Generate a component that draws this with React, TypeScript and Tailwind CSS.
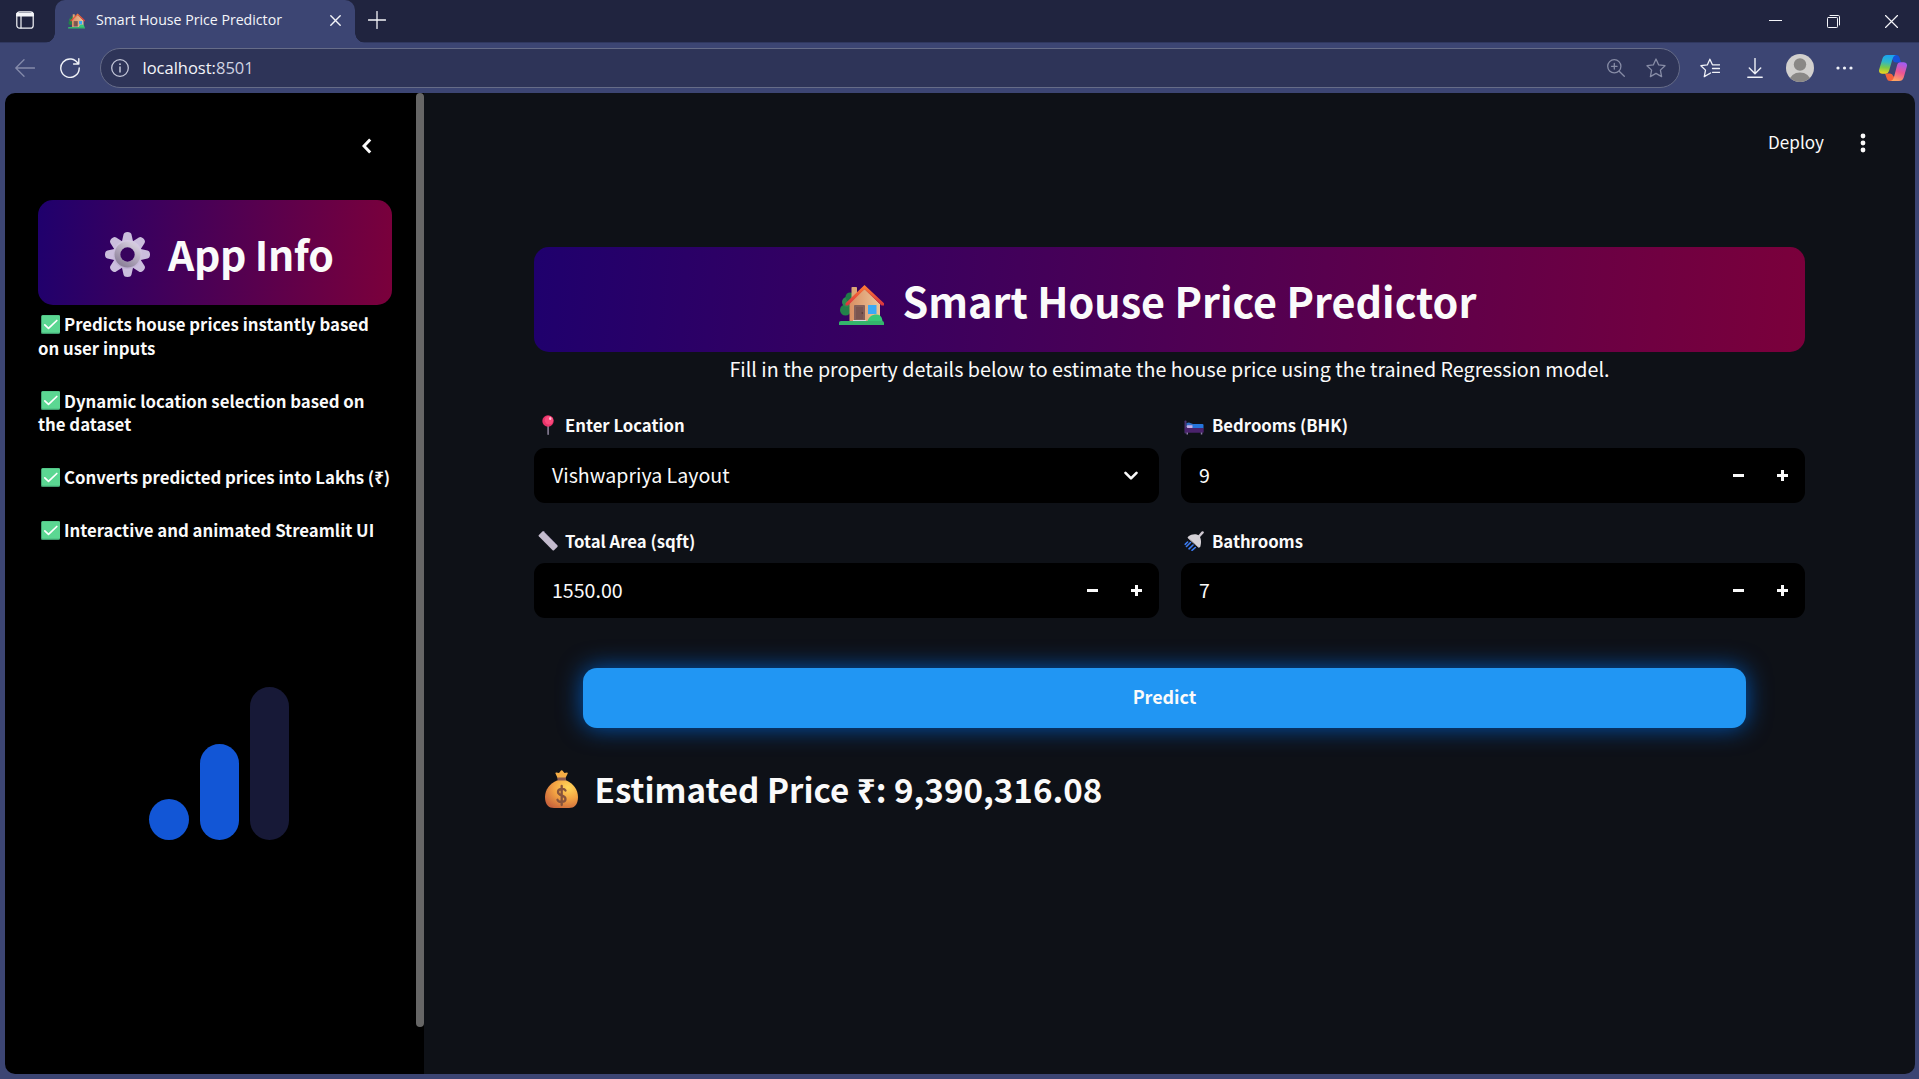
import type { ReactNode } from 'react';

function HouseIcon({ className }: { className: string }) {
  return (
    <svg viewBox="0 0 45 40" className={className}>
      <defs>
        <linearGradient id="wall" x1="0" x2="1" y1="0" y2="0">
          <stop offset="0" stopColor="#d98f62" />
          <stop offset="1" stopColor="#ecc49a" />
        </linearGradient>
        <linearGradient id="roof" x1="0" x2="0" y1="0" y2="1">
          <stop offset="0" stopColor="#ff7f35" />
          <stop offset="1" stopColor="#d9333f" />
        </linearGradient>
      </defs>
      <circle cx="6.5" cy="25" r="5.5" fill="#22804a" />
      <circle cx="8" cy="17" r="5" fill="#2a8a50" />
      <circle cx="11" cy="12" r="4.5" fill="#1f7a48" />
      <rect x="12.5" y="2" width="5.5" height="13" rx="0.8" fill="#dba676" />
      <path d="M10.5 37V17L25.5 4L41 19V37Z" fill="url(#wall)" />
      <path d="M25.500 0L45 18.300V20.500H42.500L25.500 4.300L9 20.500H6.500V18.300Z" fill="url(#roof)" />
      <rect x="15" y="20" width="11" height="16" rx="0.8" fill="#85605a" />
      <rect x="17" y="22" width="7" height="12" fill="#7a5550" />
      <circle cx="23.3" cy="28" r="0.8" fill="#4b3230" />
      <rect x="14" y="35" width="13" height="2" fill="#d8d4e0" />
      <rect x="29" y="20" width="8.5" height="9" fill="#3ba9f5" />
      <path d="M28 38C29 32 33 29.500 37.500 29.500C41.500 29.500 43.500 33 43.500 37Z" fill="#38c878" />
      <path d="M0 40V37.500Q0 36 2 36H43Q45 36 45 37.500V40Z" fill="#34b56c" />
    </svg>
  );
}

function GearIcon() {
  return (
    <svg viewBox="-22.500 -22.500 45 45" className="mt-[3px] size-[45px]">
      <defs>
        <linearGradient id="gear" gradientUnits="userSpaceOnUse" x1="6" x2="-6" y1="-22" y2="22">
          <stop offset="0" stopColor="#ded3ea" />
          <stop offset="1" stopColor="#b7a8cd" />
        </linearGradient>
        <linearGradient id="ring" x1="0.800" x2="0.200" y1="0" y2="1">
          <stop offset="0" stopColor="#d3cadb" />
          <stop offset="1" stopColor="#8e839b" />
        </linearGradient>
      </defs>
      {[0, 45, 90, 135].map((a) => (
        <path
          key={a}
          transform={`rotate(${a})`}
          d="M-4 -20Q-3.500 -22.500 0 -22.500Q3.500 -22.500 4 -20L6 -11V11L4 20Q3.500 22.500 0 22.500Q-3.500 22.500 -4 20L-6 11V-11Z"
          fill="#cbbedd"
        />
      ))}
      <circle r="14.500" fill="url(#gear)" />
      <circle r="10" fill="none" stroke="url(#ring)" strokeWidth="6" />
      <circle r="7.200" fill="#37035d" />
    </svg>
  );
}

function CheckIcon() {
  return (
    <svg viewBox="0 0 19 19" className="ml-[3px] mr-[4px] inline-block size-[19px] align-[-2.5px]">
      <rect width="19" height="19" rx="1.600" fill="#3f9a6c" />
      <rect x="0.800" y="0.300" width="18.200" height="17.500" rx="1.200" fill="#5bd792" />
      <path d="M3.800 9.800L7.500 13.400L15.800 5.500" fill="none" stroke="#fff" strokeWidth="1.700" strokeLinecap="round" strokeLinejoin="round" />
    </svg>
  );
}

function PinIcon() {
  return (
    <svg viewBox="0 0 20 20" className="size-5">
      <rect x="9.400" y="9" width="1.400" height="11" rx="0.700" fill="#9a8fa8" />
      <circle cx="10" cy="6" r="5.700" fill="#e8336a" />
      <circle cx="11" cy="5.200" r="4.200" fill="#fa4a7c" />
      <ellipse cx="12.200" cy="3.600" rx="1.200" ry="1.500" fill="#ffc0d2" />
    </svg>
  );
}

function RulerIcon() {
  return (
    <svg viewBox="0 0 20 20" className="size-5">
      <path d="M5.500 0.300L19.500 14.500Q20 15.200 19.300 16L16 19.300Q15.300 19.800 14.600 19.200L0.800 5.300Q0.300 4.700 0.900 4L4.400 0.400Q5 -0.100 5.500 0.300Z" fill="#c3bbcd" />
      <path d="M5.500 0.300L19.500 14.500" stroke="#8a7fa5" strokeWidth="0.900" strokeDasharray="1.200 1" />
    </svg>
  );
}

function BedIcon() {
  return (
    <svg viewBox="0 0 20 20" className="-ml-px mr-px size-5">
      <rect x="0.500" y="5.500" width="2" height="13" rx="0.800" fill="#4b3574" />
      <path d="M2.500 8L5 7.500L9 9V12H2.500Z" fill="#2f6fc4" />
      <rect x="2.700" y="10.300" width="6.500" height="2.800" rx="0.800" fill="#c3aee6" />
      <rect x="8.500" y="9" width="11" height="5" rx="1" fill="#2575dc" />
      <rect x="1" y="13" width="18.700" height="4.800" rx="0.800" fill="#4a226c" />
      <rect x="2.500" y="17.500" width="1.500" height="2" fill="#8b7aa8" />
      <rect x="16.800" y="17.500" width="1.500" height="2" fill="#8b7aa8" />
    </svg>
  );
}

function ShowerIcon() {
  return (
    <svg viewBox="0 0 20 20" className="-ml-px mr-px size-5">
      <path d="M14.500 6L18.600 1.400" stroke="#cfc9d2" strokeWidth="2.400" strokeLinecap="round" />
      <path d="M4.300 5.500C7.500 3 12 2.500 14.800 4.500C17.500 7 17.500 12 16.300 15.800Q15.500 17.300 14 15.800L4.200 7.300Q3.300 6.300 4.300 5.500Z" fill="#d3d0d5" />
      <path d="M4 7L14.500 16.300" stroke="#a5a1aa" strokeWidth="1" strokeLinecap="round" />
      <path d="M3.600 11L1.200 13.300M6.500 11.500L2.500 15.500M9 14L5 17.800M11.300 16.500L8 19.300" stroke="#3c7cf2" strokeWidth="1.600" strokeLinecap="round" />
    </svg>
  );
}

function MoneyBagIcon() {
  return (
    <svg viewBox="0 0 33 38" className="h-[38px] w-[33px]">
      <defs>
        <radialGradient id="bag" cx="0.700" cy="0.250" r="0.850">
          <stop offset="0" stopColor="#ffd75a" />
          <stop offset="0.500" stopColor="#f3a443" />
          <stop offset="1" stopColor="#c9653c" />
        </radialGradient>
      </defs>
      <path d="M10.500 3.500Q10 2.300 11.500 2.600L14 3L16 0.500Q16.700 -0.200 17.400 0.500L19.500 3L22 2.600Q23.200 2.500 22.600 3.800L20 9H13Z" fill="#f5ad45" />
      <rect x="12.500" y="7.500" width="8.500" height="4" rx="1" fill="#8a5a50" />
      <path d="M12 10.500H21.500C28 13 33 20 33 27C33 35 29 38 24 38H9C4 38 0 35 0 27C0 20 5 13 12 10.500Z" fill="url(#bag)" />
      <path d="M20.500 20.500C19.500 18.500 13 18 13 22C13 26.300 20.500 24.500 20.500 29C20.500 33 13.500 32.500 12.500 29.800M16.700 16V35" fill="none" stroke="#87543c" strokeWidth="2.300" strokeLinecap="round" />
    </svg>
  );
}

function CopilotIcon() {
  return (
    <svg viewBox="0 0 28 26" className="h-[26px] w-7">
      <defs>
        <linearGradient id="cpA" x1="0.300" x2="0.200" y1="0" y2="1">
          <stop offset="0" stopColor="#1ba4f0" />
          <stop offset="0.350" stopColor="#2fb7c8" />
          <stop offset="0.650" stopColor="#79c94a" />
          <stop offset="1" stopColor="#f7d51a" />
        </linearGradient>
        <linearGradient id="cpB" x1="0.600" x2="0.300" y1="0" y2="1">
          <stop offset="0" stopColor="#a45cf0" />
          <stop offset="0.500" stopColor="#ee5592" />
          <stop offset="1" stopColor="#ffa860" />
        </linearGradient>
      </defs>
      <path d="M9 0H17.500Q19.800 0 20.500 2.500L22 7.500H17Q14.500 7.500 13.800 5Z" fill="#1752d8" />
      <path d="M19 26H11Q8.500 26 7.800 23.500L6 18.500H11Q13.500 18.500 14.200 21Z" fill="#f4623a" />
      <path d="M8 0H17Q14.500 0.500 13.500 4L10 16Q9.200 18.800 6.500 18.800H3Q-1 18.500 0.300 14L3.500 3.500Q4.600 0 8 0Z" fill="url(#cpA)" />
      <path d="M20 26H11.500Q14 25.500 15 22L18 10.500Q18.800 7.300 21.500 7.300H25Q29 7.500 27.700 12L24.700 22.500Q23.600 26 20 26Z" fill="url(#cpB)" />
    </svg>
  );
}

function Stroke({ box, className, width = 1.4, children }: { box: string; className: string; width?: number; children: ReactNode }) {
  return (
    <svg viewBox={box} className={className} fill="none" stroke="currentColor" strokeWidth={width} strokeLinecap="round" strokeLinejoin="round">
      {children}
    </svg>
  );
}

const STAR = 'M10 1L12.700 6.900L19 7.700L14.400 12.100L15.600 18.600L10 15.400L4.400 18.600L5.600 12.100L1 7.700L7.300 6.900Z';

function TabStrip() {
  return (
    <div className="flex h-[43px] border-b border-[#303860] bg-[#20243f] text-[#f4f5f9]">
      <div className="flex h-[43px] w-[55px] pl-4 pt-[11px]">
        <Stroke box="0 0 18 18" className="size-[18px]" width={1.2}>
          <rect x="0.800" y="0.800" width="16.400" height="16.400" rx="2.800" />
          <path d="M1.200 2.800H16.800M1 4.300H17" strokeWidth="2.200" />
          <path d="M5 5V17" strokeWidth="1.200" />
        </Stroke>
      </div>
      <div className="relative flex h-[43px] w-[300px] rounded-t-[10px] bg-[#3c4573]">
        <div className="absolute bottom-0 -left-2.5 size-2.5 bg-[radial-gradient(circle_at_0_0,transparent_9.5px,#3c4573_10px)]" />
        <div className="absolute bottom-0 -right-2.5 size-2.5 bg-[radial-gradient(circle_at_100%_0,transparent_9.5px,#3c4573_10px)]" />
        <HouseIcon className="ml-[13px] mt-[13px] h-4 w-[17px]" />
        <span className="ml-[11px] mt-[9px] w-[234px] font-['Open_Sans',sans-serif] text-[14.150px] leading-[22px] whitespace-nowrap">
          Smart House Price Predictor
        </span>
        <Stroke box="0 0 11 11" className="mt-[15px] size-[11px] shrink-0">
          <path d="M0.800 0.800L10.200 10.200M10.200 0.800L0.800 10.200" />
        </Stroke>
        <div className="w-3.5 shrink-0" />
      </div>
      <Stroke box="0 0 18 18" className="ml-[13px] mt-[10.500px] size-[18px]" width={1.3}>
        <path d="M9 0.500V17.500M0.500 9H17.500" />
      </Stroke>
      <div className="ml-auto flex w-[150px] pt-[15px]">
        <Stroke box="0 0 13 13" className="size-[13px]" width={1}>
          <path d="M0 5.500H13" />
        </Stroke>
        <Stroke box="0 0 13 13" className="ml-[45px] size-[13px]" width={1}>
          <rect x="0.500" y="2.500" width="10" height="10" rx="0.800" />
          <path d="M3 0.500H11.300Q12.500 0.500 12.500 1.700V10" />
        </Stroke>
        <Stroke box="0 0 13 13" className="ml-[45px] size-[13px]" width={1.2}>
          <path d="M0.500 0.500L12.500 12.500M12.500 0.500L0.500 12.500" />
        </Stroke>
      </div>
    </div>
  );
}

function Toolbar() {
  return (
    <div className="flex h-[50px] items-center bg-[#3c4573] text-[#f0f2f8]">
      <Stroke box="0 0 20 18" className="ml-[15px] h-[18px] w-5 text-[#858bab]" width={1.3}>
        <path d="M9 0.800L0.800 9L9 17.200M1 9H19.500" />
      </Stroke>
      <Stroke box="0 0 20 20" className="ml-[25px] size-5" width={1.4}>
        <path d="M18.200 6A9.200 9.200 0 1 0 19.200 10M18.800 0.800V6H13.600" />
      </Stroke>
      <div className="ml-5 flex h-10 w-[1580px] items-center rounded-full border border-[#666c88] bg-[#2e3458]">
        <Stroke box="0 0 18 18" className="ml-2.5 size-[18px] text-[#c3c6d8]" width={1.3}>
          <circle cx="9" cy="9" r="8.300" />
          <path d="M9 8V13" strokeWidth="1.500" />
          <path d="M9 5.100V5.200" strokeWidth="1.800" />
        </Stroke>
        <span className="ml-[13.500px] pb-px font-['Open_Sans',sans-serif] text-[16.5px] leading-5 text-[#f4f5f9]">
          localhost:<span className="text-[#d0d3e2]">8501</span>
        </span>
        <Stroke box="0 0 18 18" className="ml-auto size-[18px] text-[#878ca6]" width={1.3}>
          <circle cx="7.300" cy="7.300" r="6.600" />
          <path d="M12.200 12.200L17.300 17.300M7.300 4.500V10.100M4.500 7.300H10.100" />
        </Stroke>
        <Stroke box="0 0 20 20" className="ml-[21px] mr-[13px] size-5 text-[#878ca6]" width={1.3}>
          <path d={STAR} />
        </Stroke>
      </div>
      <Stroke box="0 0 20 20" className="ml-5 size-5" width={1.3}>
        <path d="M12.300 6.500L9.900 1.200L7.300 6.900L0.900 7.700L5.500 12.100L4.300 18.600L8.800 16M12.500 6.800H19.500M12.500 10.500H19.500M12.500 14.300H19.500M9 16L10.500 15" />
      </Stroke>
      <Stroke box="0 0 16 20" className="ml-[27px] h-5 w-4" width={1.4}>
        <path d="M8 0.500V15M2.300 10L8 15.700L13.700 10M0.800 19.200H15.200" />
      </Stroke>
      <svg viewBox="0 0 28 28" className="ml-[23px] size-7">
        <clipPath id="av"><circle cx="14" cy="14" r="14" /></clipPath>
        <g clipPath="url(#av)">
          <rect width="28" height="28" fill="#d2d0ce" />
          <circle cx="14" cy="10.500" r="6.200" fill="#8a8886" />
          <ellipse cx="14" cy="27" rx="10.500" ry="8.500" fill="#8a8886" />
        </g>
      </svg>
      <svg viewBox="0 0 17 4" className="ml-[22px] h-1 w-[17px]" fill="#f0f2f8">
        <circle cx="2" cy="2" r="1.600" />
        <circle cx="8.500" cy="2" r="1.600" />
        <circle cx="15" cy="2" r="1.600" />
      </svg>
      <div className="ml-[26px]"><CopilotIcon /></div>
    </div>
  );
}

const FEATURES = [
  'Predicts house prices instantly based\non user inputs',
  'Dynamic location selection based on\nthe dataset',
  'Converts predicted prices into Lakhs (₹)',
  'Interactive and animated Streamlit UI',
];

function Sidebar() {
  return (
    <aside className="flex w-[419px] shrink-0 bg-black">
      <div className="flex w-[411px] flex-col pl-[33px]">
        <div className="flex h-[107px] pt-[44.500px] pl-[323.500px]">
          <Stroke box="0 0 10 16" className="h-4 w-2.5" width={3}>
            <path d="M8.200 1.500L2 8L8.200 14.500" strokeLinecap="butt" strokeLinejoin="miter" />
          </Stroke>
        </div>
        <div className="flex h-[105px] w-[354px] items-center rounded-[15px] bg-[linear-gradient(95deg,#1f006d,#7b003b)] pl-[67px]">
          <GearIcon />
          <h2 className="mt-[2px] ml-[18px] text-[41px] leading-none font-bold tracking-[-0.4px] whitespace-nowrap">App Info</h2>
        </div>
        <ul className="mt-[8px] flex w-[370px] flex-col gap-[29.5px] text-[16.78px] leading-[23.6px] font-bold whitespace-pre-line">
          {FEATURES.map((f) => (
            <li key={f}><CheckIcon />{f}</li>
          ))}
        </ul>
        <div className="mt-[143.500px] flex items-end pl-[111px]">
          <div className="h-[41px] w-10 rounded-[50%] bg-[#1256d6]" />
          <div className="ml-[11px] h-24 w-[39px] rounded-full bg-[#1256d6]" />
          <div className="ml-[11px] h-[153px] w-[39px] rounded-full bg-[#171937]" />
        </div>
      </div>
      <div className="h-[934px] w-2 rounded-full bg-[#666666]" />
    </aside>
  );
}

function Minus() {
  return <svg viewBox="0 0 11 11" className="size-[11px]" fill="#fafafa"><rect y="4" width="11" height="3" /></svg>;
}

function Plus() {
  return <svg viewBox="0 0 11 11" className="size-[11px]" fill="#fafafa"><rect y="4" width="11" height="3" /><rect x="4" width="3" height="11" /></svg>;
}

type FieldProps = { icon: ReactNode; label: string; value: string; select?: boolean };

function Field({ icon, label, value, select }: FieldProps) {
  return (
    <div className="flex flex-col">
      <div className="flex flex-1 pl-1">
        <div className="mt-px">{icon}</div>
        <label className="ml-[7px] text-[16.7px] leading-[22px] font-bold">{label}</label>
      </div>
      <div className="flex h-[55px] items-center rounded-[11px] bg-black pr-[17px] pl-[18px] text-[19.6px]">
        <span className="pb-0.5 leading-6">{value}</span>
        {select ? (
          <Stroke box="0 0 14 10" className="ml-auto mr-1 h-2.5 w-3.5" width={2.6}>
            <path d="M1.500 1.800L7 7.300L12.500 1.800" />
          </Stroke>
        ) : (
          <div className="ml-auto flex gap-[33px]"><Minus /><Plus /></div>
        )}
      </div>
    </div>
  );
}

function Main() {
  return (
    <main className="flex flex-1 flex-col bg-[#0e1117] pr-[109px] pl-[110px]">
      <div className="-mr-[109px] flex h-[154px] justify-end pt-[37px] pr-[48px]">
        <span className="text-[17.1px] leading-6">Deploy</span>
        <svg viewBox="0 0 8 20" className="ml-[35px] mt-[2.500px] h-5 w-2" fill="#fafafa">
          <circle cx="4" cy="3" r="2.400" />
          <circle cx="4" cy="10" r="2.400" />
          <circle cx="4" cy="17" r="2.400" />
        </svg>
      </div>
      <div className="flex h-[105px] w-[1271px] items-center rounded-[15px] bg-[linear-gradient(95deg,#1f006d,#7b003b)] pl-[305px]">
        <HouseIcon className="mt-[10px] h-10 w-[45px]" />
        <h1 className="mt-[2px] ml-[18.500px] text-[41.300px] leading-none font-bold whitespace-nowrap">Smart House Price Predictor</h1>
      </div>
      <p className="mt-[5px] w-[1271px] text-center text-[19.7px] leading-6 whitespace-nowrap">
        Fill in the property details below to estimate the house price using the trained Regression model.
      </p>
      <div className="mt-[33px] grid grid-cols-[625px_624px] grid-rows-[89px_88px] gap-x-[22px] gap-y-[27px]">
        <Field icon={<PinIcon />} label="Enter Location" value="Vishwapriya Layout" select />
        <Field icon={<BedIcon />} label="Bedrooms (BHK)" value="9" />
        <Field icon={<RulerIcon />} label="Total Area (sqft)" value="1550.00" />
        <Field icon={<ShowerIcon />} label="Bathrooms" value="7" />
      </div>
      <button className="mt-[50px] ml-[49px] h-[60px] w-[1163px] rounded-[14px] bg-[#2196f3] pb-[5px] text-[17.9px] leading-6 font-bold shadow-[0_0_25px_#0055b4]">
        Predict
      </button>
      <div className="mt-[39px] flex h-[44px] items-center pl-[10.500px]">
        <MoneyBagIcon />
        <h3 className="ml-[17px] text-[33.150px] leading-10 font-bold whitespace-nowrap">Estimated Price ₹: 9,390,316.08</h3>
      </div>
    </main>
  );
}

export default function App() {
  return (
    <div className="flex h-[1079px] w-[1919px] flex-col overflow-hidden bg-[#3c4573] font-['Noto_Sans_CJK_SC','Noto_Sans',sans-serif] text-[#fafafa]">
      <TabStrip />
      <Toolbar />
      <div className="mr-1 ml-[5px] flex h-[981px] overflow-hidden rounded-[10px]">
        <Sidebar />
        <Main />
      </div>
    </div>
  );
}
